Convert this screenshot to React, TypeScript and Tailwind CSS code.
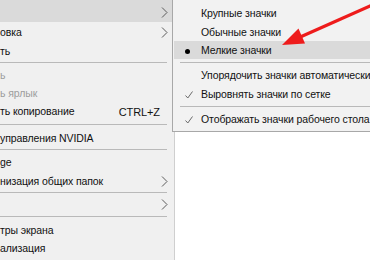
import React from 'react';

const FONT = "font-['Liberation_Sans','Noto_Sans',sans-serif]";

const Chevron: React.FC = () => (
  <svg width="7" height="11" viewBox="0 0 7 11" className="shrink-0">
    <polyline points="1,0.5 6,5.5 1,10.5" fill="none" stroke="#5a5a5a" strokeWidth="1" />
  </svg>
);

const Check: React.FC = () => (
  <svg width="8" height="8" viewBox="0 0 8 8" className="shrink-0">
    <polyline points="0.5,4.5 2.8,7 7.5,0.5" fill="none" stroke="#6a6a6a" strokeWidth="1" />
  </svg>
);

type Row = { text?: string; h: number; hl?: boolean; sub?: boolean; dim?: boolean; key2?: string } | { sep: number };

const LEFT: Row[] = [
  { h: 22, hl: true, sub: true },
  { text: 'овка', h: 19, sub: true },
  { text: 'ть', h: 19 },
  { sep: 5 },
  { text: 'ь', h: 19, dim: true },
  { text: 'ь ярлык', h: 18, dim: true },
  { text: 'ть копирование', h: 18, key2: 'CTRL+Z' },
  { sep: 8 },
  { text: 'управления NVIDIA', h: 19 },
  { sep: 5 },
  { text: 'ge', h: 19 },
  { text: 'низация общих папок', h: 19, sub: true },
  { sep: 5 },
  { text: '', h: 17, sub: true },
  { sep: 9 },
  { text: 'тры экрана', h: 18 },
  { text: 'ализация', h: 18 },
];

const SUB = [
  { text: 'Крупные значки', h: 19 },
  { text: 'Обычные значки', h: 19 },
  { text: 'Мелкие значки', h: 18, mark: 'dot' },
  { sep: 6 },
  { text: 'Упорядочить значки автоматически', h: 19 },
  { text: 'Выровнять значки по сетке', h: 19, mark: 'check' },
  { sep: 7 },
  { text: 'Отображать значки рабочего стола', h: 18, mark: 'check' },
];

const App: React.FC = () => {
  return (
    <div className={`relative w-[370px] h-[260px] overflow-hidden bg-white text-[10.5px] tracking-[-0.1px] text-[#111] ${FONT}`}>
      {/* main context menu, cut at the left edge */}
      <div className="w-[175px] h-full bg-[#f0f0f0] border-r border-[#cfcfcf]">
        {LEFT.map((r, i) =>
          'sep' in r ? (
            <div key={i} className="flex items-center" style={{ height: r.sep }}>
              <div className="w-[167px] h-px bg-[#b9b9b9]" />
            </div>
          ) : (
            <div
              key={i}
              className={`flex items-center w-[172px] pr-[4px] pt-[2px] ${r.hl ? 'bg-[#dadada]' : ''}`}
              style={{ height: r.h }}
            >
              <span className={`flex-1 whitespace-nowrap ${r.dim ? 'text-[#9d9d9d]' : ''}`}>{r.text}</span>
              {r.key2 && <span className="mr-[8px] text-[11px]">{r.key2}</span>}
              {r.sub && <Chevron />}
            </div>
          )
        )}
      </div>

      {/* "Вид" submenu */}
      <div className="absolute left-[172px] top-0 w-[210px] h-[132px] bg-[#f2f2f2] border-l border-b border-[#a8a8a8] pt-[3px]">
        {SUB.map((r, i) =>
          'sep' in r ? (
            <div key={i} className="flex items-center pl-[7px]" style={{ height: r.sep }}>
              <div className="flex-1 h-px bg-[#b9b9b9]" />
            </div>
          ) : (
            <div
              key={i}
              className={`flex items-center whitespace-nowrap pt-[2px] ${r.mark === 'dot' ? 'bg-[#dadada] ml-[1px]' : ''}`}
              style={{ height: r.h }}
            >
              <span className={`shrink-0 flex items-center ${r.mark === 'dot' ? 'w-[27px] pl-[11px]' : 'w-[28px] pl-[12px]'}`}>
                {r.mark === 'dot' && <span className="w-[5px] h-[5px] rounded-full bg-black" />}
                {r.mark === 'check' && <Check />}
              </span>
              {r.text}
            </div>
          )
        )}
      </div>

      {/* red pointer arrow */}
      <svg className="absolute inset-0 pointer-events-none" width="370" height="260" viewBox="0 0 370 260">
        <line x1="372" y1="5" x2="298" y2="38" stroke="#ee1c1c" strokeWidth="3.2" />
        <polygon points="282,45 305,43.5 298.5,28.5" fill="#ee1c1c" />
      </svg>
    </div>
  );
};

export default App;
